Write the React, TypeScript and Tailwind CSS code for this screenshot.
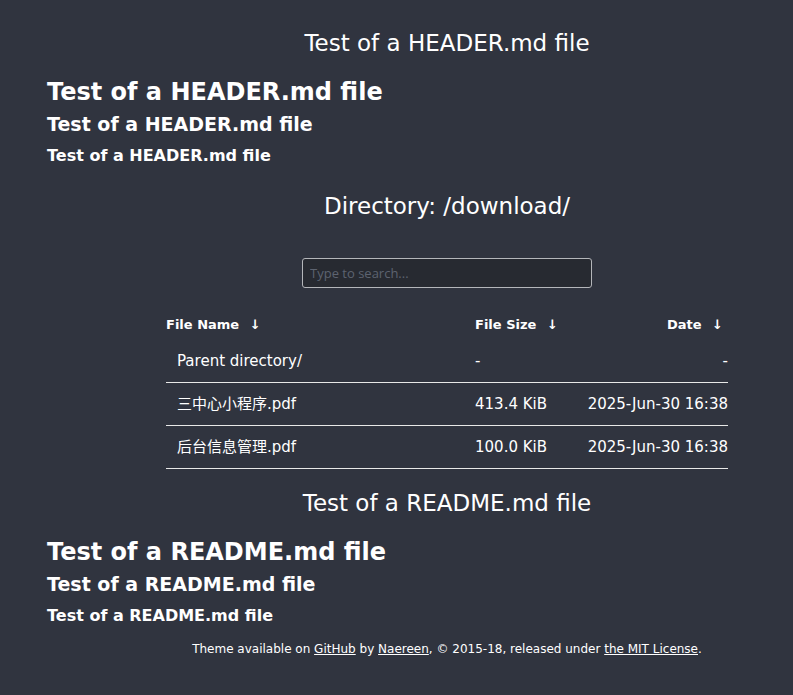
import React from 'react';

const files = [
  { name: 'Parent directory/', size: '-', date: '-' },
  { name: '三中心小程序.pdf', size: '413.4 KiB', date: '2025-Jun-30 16:38' },
  { name: '后台信息管理.pdf', size: '100.0 KiB', date: '2025-Jun-30 16:38' },
];

const font = "font-['DejaVu_Sans','Noto_Sans_CJK_SC',sans-serif]";

const Headings = ({ label }: { label: string }) => (
  <div className="px-[47px]">
    <h1 className="mt-[18px] text-[24px] leading-[32px] font-bold">{label}</h1>
    <h2 className="mt-[2px] text-[19px] leading-[28px] font-bold">{label}</h2>
    <h3 className="mt-[6px] text-[16px] leading-[24px] font-bold">{label}</h3>
  </div>
);

export default function App() {
  return (
    <div className={`min-h-[695px] bg-[#30343f] text-white ${font} pb-10`}>
      {/* HEADER.md */}
      <div className="ml-[101px] pt-[28px] text-center text-[23px] leading-[30px]">
        Test of a HEADER.md file
      </div>
      <Headings label="Test of a HEADER.md file" />

      <div className="ml-[101px] flex flex-col items-center">
        <div className="mt-[23px] text-[23px] leading-[30px]">Directory: /download/</div>
        <input
          type="text"
          placeholder="Type to search..."
          className="mt-[37px] h-[30px] w-[290px] rounded-[3px] border border-[#b4b6ba] bg-[#272a31] px-[7px] font-['Open_Sans',sans-serif] text-[13px] text-white placeholder-[#5d6370] outline-none"
        />

        <table className="mt-[21px] w-[562px] border-collapse text-[15px]">
          <thead>
            <tr className="h-[30px] text-[13px]">
              <th className="w-[309px] pt-[1px] text-left font-bold">
                File Name <span className="ml-[6px]">↓</span>
              </th>
              <th className="pt-[1px] text-left font-bold">
                File Size <span className="ml-[6px]">↓</span>
              </th>
              <th className="pt-[1px] pr-[5px] text-right font-bold">
                Date <span className="ml-[6px]">↓</span>
              </th>
            </tr>
          </thead>
          <tbody>
            {files.map((f) => (
              <tr key={f.name} className="h-[43px] border-b border-[#e8e8e8]">
                <td className="pl-[11px] pt-[2px]">{f.name}</td>
                <td className="pt-[2px]">{f.size}</td>
                <td className="pt-[2px] text-right">{f.date}</td>
              </tr>
            ))}
          </tbody>
        </table>

        <div className="mt-[19px] text-[23px] leading-[30px]">Test of a README.md file</div>
      </div>

      {/* README.md */}
      <Headings label="Test of a README.md file" />

      <div className="ml-[101px] mt-[11px] text-center text-[12px] leading-[20px]">
        Theme available on <a className="underline" href="#">GitHub</a> by{' '}
        <a className="underline" href="#">Naereen</a>, © 2015-18, released under{' '}
        <a className="underline" href="#">the MIT License</a>.
      </div>
    </div>
  );
}
